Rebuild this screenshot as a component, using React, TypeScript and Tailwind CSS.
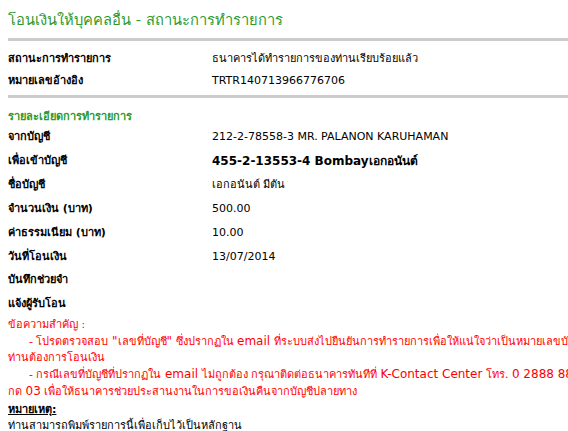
import React from "react";

const font = { fontFamily: '"DejaVu Sans", Verdana, Tahoma, "Noto Sans", sans-serif' };

function Row({ label, value, bold, h = "h-[24px]" }: { label: string; value?: string; bold?: boolean; h?: string }) {
  return (
    <div className={`flex items-center ${h}`}>
      <div className="w-[204px] shrink-0 font-bold text-[11px] text-black">{label}</div>
      <div className={`text-[11px] text-black whitespace-nowrap ${bold ? "font-bold text-[12px]" : ""}`}>{value}</div>
    </div>
  );
}

function L({ children }: { children: React.ReactNode }) {
  return <span className="text-[12px]">{children}</span>;
}

export default function App() {
  return (
    <div className="w-[568px] h-[431px] overflow-hidden bg-white" style={font}>
      <div className="w-[640px] pl-2">
        <div className="pt-[10px] h-[30px] leading-[20px] text-[14.7px] text-[#2d9a2d]">
          โอนเงินให้บุคคลอื่น - สถานะการทำรายการ
        </div>
        <div className="mt-[8px] h-[3px] bg-[#cccccc]" />
        <div className="pt-[7px]">
          <Row label="สถานะการทำรายการ" value="ธนาคารได้ทำรายการของท่านเรียบร้อยแล้ว" h="h-[22px]" />
          <Row label="หมายเลขอ้างอิง" value="TRTR140713966776706" h="h-[22px]" />
        </div>
        <div className="mt-[3px] h-[3px] bg-[#cccccc]" />
        <div className="pt-[13px] h-[26px] flex items-center text-[11px] font-bold text-[#2d9a2d]">
          รายละเอียดการทำรายการ
        </div>
        <div className="mt-[1px]">
          <Row label="จากบัญชี" value="212-2-78558-3 MR. PALANON KARUHAMAN" />
          <Row label="เพื่อเข้าบัญชี" value="455-2-13553-4 Bombayเอกอนันต์" bold />
          <Row label="ชื่อบัญชี" value="เอกอนันต์ มีตัน" />
          <Row label="จำนวนเงิน (บาท)" value="500.00" />
          <Row label="ค่าธรรมเนียม (บาท)" value="10.00" />
          <Row label="วันที่โอนเงิน" value="13/07/2014" />
          <Row label="บันทึกช่วยจำ" h="h-[22px]" />
          <Row label="แจ้งผู้รับโอน" h="h-[26px]" />
        </div>
        <div className="text-[11px] leading-[16px] text-[#ff0000] whitespace-nowrap">
          <div>ข้อความสำคัญ :</div>
          <div>
            <span className="pl-[21px]">
              - โปรดตรวจสอบ <L>"</L>เลขที่บัญชี<L>"</L> ซึ่งปรากฏใน <L>email</L> ที่ระบบส่งไปยืนยันการทำรายการเพื่อให้แน่ใจว่าเป็นหมายเลขบัญชีที่
            </span>
            <br />
            ท่านต้องการโอนเงิน
          </div>
          <div>
            <span className="pl-[21px]">
              - กรณีเลขที่บัญชีที่ปรากฏใน <L>email</L> ไม่ถูกต้อง กรุณาติดต่อธนาคารทันทีที่ <L>K-Contact Center</L> โทร. <L>0 2888 8888</L>
            </span>
            <br />
            กด <L>03</L> เพื่อให้ธนาคารช่วยประสานงานในการขอเงินคืนจากบัญชีปลายทาง
          </div>
        </div>
        <div className="mt-[2px] text-[11px] font-bold underline leading-[16px]">หมายเหตุ:</div>
        <div className="mt-0 text-[11px] leading-[15px]">ท่านสามารถพิมพ์รายการนี้เพื่อเก็บไว้เป็นหลักฐาน</div>
      </div>
    </div>
  );
}
